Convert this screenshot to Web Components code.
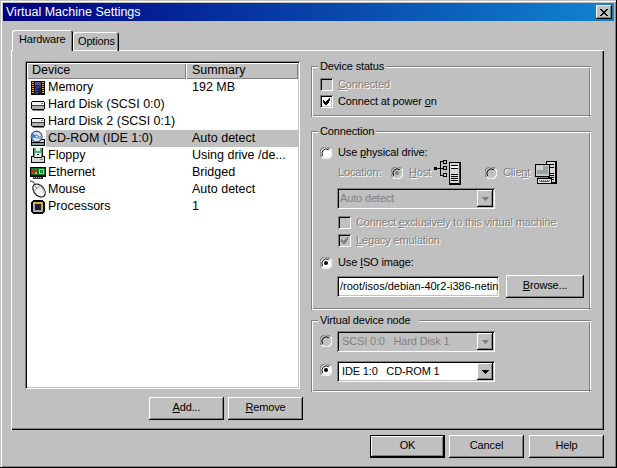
<!DOCTYPE html>
<html>
<head>
<meta charset="utf-8">
<title>Virtual Machine Settings</title>
<style>
  html, body { margin: 0; padding: 0; background: #c0c0c0; }
  body { font: 11px/15px "Liberation Sans", Arial, sans-serif; letter-spacing: -.15px; color: #000; }
</style>
</head>
<body>
<vm-window>
  <vm-titlebar slot="title">Virtual Machine Settings</vm-titlebar>
  <vm-tabs slot="tabs">
    <vm-panel-left slot="left">
      <vm-list>
        <vm-row icon="memory" name="Memory" summary="192 MB"></vm-row>
        <vm-row icon="disk" name="Hard Disk (SCSI 0:0)"></vm-row>
        <vm-row icon="disk" name="Hard Disk 2 (SCSI 0:1)"></vm-row>
        <vm-row icon="cd" name="CD-ROM (IDE 1:0)" summary="Auto detect" selected></vm-row>
        <vm-row icon="floppy" name="Floppy" summary="Using drive /de..."></vm-row>
        <vm-row icon="ethernet" name="Ethernet" summary="Bridged"></vm-row>
        <vm-row icon="mouse" name="Mouse" summary="Auto detect"></vm-row>
        <vm-row icon="cpu" name="Processors" summary="1"></vm-row>
      </vm-list>
      <vm-actions>
        <vm-button><u>A</u>dd...</vm-button>
        <vm-button><u>R</u>emove</vm-button>
      </vm-actions>
    </vm-panel-left>

    <vm-group slot="right" label="Device status" style="height:51px">
      <vm-check disabled style="margin-top:3px"><u>C</u>onnected</vm-check>
      <vm-check checked>Connect at power <u>o</u>n</vm-check>
    </vm-group>

    <vm-group slot="right" label="Connection" style="height:179px;margin-top:14px">
      <vm-radio style="margin-top:6px">Use <u>p</u>hysical drive:</vm-radio>
      <vm-location></vm-location>
      <vm-combo disabled style="margin:3px 0 0 17px">Auto detect</vm-combo>
      <vm-check disabled style="margin:5px 0 0 18px">Connect <u>e</u>xclusively to this virtual machine</vm-check>
      <vm-check disabled checked style="margin:1px 0 0 18px"><u>L</u>egacy emulation</vm-check>
      <vm-radio checked style="margin-top:5px">Use <u>I</u>SO image:</vm-radio>
      <vm-isorow></vm-isorow>
    </vm-group>

    <vm-group slot="right" label="Virtual device node" gap="8" style="height:72px;margin-top:10px">
      <vm-noderow disabled value="SCSI 0:0   Hard Disk 1" style="margin-top:4px;--up:2px"></vm-noderow>
      <vm-noderow checked value="IDE 1:0   CD-ROM 1" style="margin-top:9px;--up:4px"></vm-noderow>
    </vm-group>
  </vm-tabs>
  <vm-footer slot="footer">
    <vm-button default>OK</vm-button>
    <vm-button style="margin-left:4px">Cancel</vm-button>
    <vm-button style="margin-left:5px">Help</vm-button>
  </vm-footer>
</vm-window>

<script>
// little helper, every element here is just a shadow root with fixed markup
function shadow(el, html) {
  const template = document.createElement("template");
  template.innerHTML = html;
  el.attachShadow({ mode: "open" });
  el.shadowRoot.appendChild(template.content.cloneNode(true));
}

const ICONS = {
  memory: `<svg width="16" height="16" viewBox="0 0 16 16" shape-rendering="crispEdges">
    <rect x="1" y="1" width="14" height="14" fill="#000"/>
    <path fill="#e8b830" d="M2 2h2v1H2zM2 4h2v1H2zM2 6h2v1H2zM2 8h2v1H2zM2 10h2v1H2zM2 12h2v1H2zM12 2h2v1h-2zM12 4h2v1h-2zM12 6h2v1h-2zM12 8h2v1h-2zM12 10h2v1h-2zM12 12h2v1h-2z"/>
    <rect x="5" y="2" width="6" height="12" fill="#30306a"/>
    <rect x="5" y="2" width="6" height="3" fill="#50508c"/>
    <rect x="8" y="8" width="3" height="6" fill="#1c1c44"/>
  </svg>`,
  disk: `<svg width="16" height="16" viewBox="0 0 16 16" shape-rendering="crispEdges">
    <path fill="#000" d="M2 4h12v1h1v7h-1v1H2v-1H1V5h1z"/>
    <rect x="2" y="5" width="12" height="3" fill="#f0f0f0"/>
    <rect x="2" y="9" width="12" height="3" fill="#b0b0b0"/>
    <rect x="2" y="8" width="12" height="1" fill="#404040"/>
    <rect x="11" y="6" width="2" height="1" fill="#20c040"/>
    <rect x="3" y="13" width="11" height="1" fill="#808080"/>
  </svg>`,
  cd: `<svg width="17" height="17" viewBox="0 0 17 17">
    <path shape-rendering="crispEdges" fill="#000" d="M1 9h15v7H1z"/>
    <path shape-rendering="crispEdges" fill="#c8d8c8" d="M2 10h13v2H2z"/>
    <path shape-rendering="crispEdges" fill="#70a090" d="M2 13h13v2H2z"/>
    <circle cx="7" cy="6.5" r="5.8" fill="#d0e4f8" stroke="#000"/>
    <path d="M7 6.5L3 2.6A5.5 5.5 0 0 0 2 9z" fill="#4a80d0"/>
    <path d="M7 6.5L11 10A5.5 5.5 0 0 0 12.4 5z" fill="#88b0e8"/>
    <circle cx="7" cy="6.5" r="1.5" fill="#fff" stroke="#204080" stroke-width=".8"/>
  </svg>`,
  floppy: `<svg width="17" height="17" viewBox="0 0 17 17" shape-rendering="crispEdges">
    <path fill="#000" d="M3 0h11v9h2v7H1V9h2z"/>
    <rect x="4" y="1" width="9" height="9" fill="#58a878"/>
    <rect x="6" y="1" width="5" height="3" fill="#e8f0e8"/>
    <rect x="5" y="6" width="7" height="4" fill="#fff"/>
    <rect x="7" y="7" width="3" height="1" fill="#000"/>
    <rect x="2" y="11" width="13" height="4" fill="#d8d8d8"/>
    <rect x="2" y="10" width="2" height="1" fill="#d8d8d8"/>
    <rect x="13" y="10" width="2" height="1" fill="#d8d8d8"/>
    <rect x="11" y="12" width="3" height="1" fill="#808080"/>
  </svg>`,
  ethernet: `<svg width="16" height="16" viewBox="0 0 16 16" shape-rendering="crispEdges">
    <rect x="0" y="2" width="16" height="10" fill="#000"/>
    <rect x="1" y="3" width="14" height="7" fill="#087828"/>
    <path fill="#f0d020" d="M9 4h5v1H9zM9 8h5v1H9zM9 5h1v3H9zM13 5h1v3h-1z"/>
    <rect x="11" y="6" width="1" height="1" fill="#f0d020"/>
    <path fill="#e03020" d="M2 4h2v2H2zM5 4h2v2H5zM2 7h2v2H2z"/>
    <path fill="#f0b020" d="M5 7h2v2H5z"/>
    <rect x="3" y="12" width="10" height="2" fill="#303030"/>
    <path fill="#e8c030" d="M4 12h1v1H4zM6 12h1v1H6zM8 12h1v1H8zM10 12h1v1h-1z"/>
  </svg>`,
  mouse: `<svg width="17" height="17" viewBox="0 0 17 17" style="overflow:visible">
    <path d="M0 -.5c2 2 3.5 .5 4.500 3" fill="none" stroke="#000"/>
    <g transform="rotate(-42 9 9.500)">
      <ellipse cx="9" cy="9.500" rx="5" ry="7.500" fill="#f4f4f4" stroke="#000"/>
      <path d="M4.500 6.500h9" stroke="#a0a0a0"/>
      <path d="M9 2.500v4" stroke="#a0a0a0"/>
      <path d="M12.600 9a6 6 0 0 1-2 6.300" fill="none" stroke="#b8b8b8" stroke-width="1.400"/>
    </g>
  </svg>`,
  cpu: `<svg width="16" height="16" viewBox="0 0 16 16" shape-rendering="crispEdges">
    <path fill="#000" d="M3 1h10v1h1v1h1v10h-1v1h-1v1H3v-1H2v-1H1V3h1V2h1z"/>
    <rect x="3" y="3" width="10" height="10" fill="#a8a8a8"/>
    <path fill="#e8b830" d="M4 3h1v1H4zM6 3h1v1H6zM8 3h1v1H8zM10 3h1v1h-1zM4 12h1v1H4zM6 12h1v1H6zM8 12h1v1H8zM10 12h1v1h-1zM3 5h1v1H3zM3 7h1v1H3zM3 9h1v1H3zM12 5h1v1h-1zM12 7h1v1h-1zM12 9h1v1h-1z"/>
    <rect x="5" y="5" width="6" height="6" fill="#202030"/>
  </svg>`,
  host: `<svg width="27" height="25" viewBox="0 0 27 25" shape-rendering="crispEdges" style="flex:none">
    <path fill="#000" d="M0 7h3v3H0zM3 8h3v1H3zM6 1h1v15H6zM7 1h2v1H7zM7 8h2v1H7zM7 15h2v1H7zM9 0h4v4H9zM9 6h4v4H9zM9 13h4v4H9z"/>
    <path fill="#c0c0c0" d="M10 1h2v2h-2zM10 7h2v2h-2zM10 14h2v2h-2z"/>
    <rect x="15" y="2" width="12" height="23" fill="#000"/>
    <rect x="16" y="3" width="9" height="20" fill="#d8d8d8"/>
    <path fill="#000" d="M17 5h7v1h-7zM17 8h7v1h-7zM17 14h7v1h-7zM17 16h7v1h-7zM17 18h7v1h-7zM17 20h7v1h-7z"/>
    <rect x="17" y="6" width="7" height="2" fill="#fff"/>
    <rect x="25" y="3" width="1" height="21" fill="#404040"/>
  </svg>`,
  client: `<svg width="22" height="24" viewBox="0 0 22 24" shape-rendering="crispEdges" style="flex:none">
    <rect x="11" y="0" width="11" height="23" fill="#000"/>
    <rect x="12" y="1" width="8" height="20" fill="#d8d8d8"/>
    <path fill="#000" d="M13 3h6v1h-6zM13 6h6v1h-6zM13 12h6v1h-6zM13 14h6v1h-6zM13 16h6v1h-6zM13 18h6v1h-6z"/>
    <rect x="0" y="3" width="15" height="13" fill="#000"/>
    <rect x="1" y="4" width="13" height="11" fill="#c8c8c8"/>
    <rect x="2" y="5" width="11" height="8" fill="#98a898"/>
    <rect x="2" y="5" width="6" height="4" fill="#c8d8d0"/>
    <rect x="2" y="16" width="11" height="1" fill="#808080"/>
    <rect x="2" y="17" width="15" height="6" fill="#000"/>
    <rect x="3" y="18" width="13" height="4" fill="#e0e0e0"/>
    <path fill="#606060" d="M4 19h1v1H4zM6 19h1v1H6zM8 19h1v1H8zM10 19h1v1h-1zM12 19h1v1h-1zM14 19h1v1h-1zM5 21h9v-1H5z"/>
  </svg>`
};

const RAISED = "inset -1px -1px #000, inset 1px 1px #fff, inset -2px -2px #808080";
const SUNKEN = "inset 1px 1px #808080, inset -1px -1px #fff, inset 2px 2px #000, inset -2px -2px #c0c0c0";

class VmWindow extends HTMLElement {
  constructor() {
    super();
    shadow(this, `
      <style>
        :host {
          display: flex;
          flex-direction: column;
          box-sizing: border-box;
          width: 617px;
          height: 468px;
          padding: 3px;
          background: #c0c0c0;
          box-shadow: inset -1px -1px #000, inset 1px 1px #c0c0c0, inset 2px 2px #fff, inset -2px -2px #808080;
        }
      </style>
      <slot name="title"></slot>
      <slot name="tabs"></slot>
      <slot name="footer"></slot>
    `);
  }
}
customElements.define("vm-window", VmWindow);

class VmTitlebar extends HTMLElement {
  constructor() {
    super();
    shadow(this, `
      <style>
        :host {
          display: flex;
          align-items: center;
          justify-content: space-between;
          height: 18px;
          padding: 0 2px 0 3px;
          font-size: 12.5px;
          letter-spacing: 0;
          color: #fff;
          background: linear-gradient(90deg, #000080, #1084d0);
        }
        .close {
          display: flex;
          align-items: center;
          justify-content: center;
          width: 16px;
          height: 14px;
          background: #c0c0c0;
          box-shadow: ${RAISED};
        }
      </style>
      <span><slot></slot></span>
      <div class="close">
        <svg width="8" height="7" viewBox="0 0 8 7" shape-rendering="crispEdges">
          <path fill="#000" d="M0 0h2v1h1v1h2V1h1V0h2v1H7v1H6v1H5v1h1v1h1v1h1v1H6V6H5V5H3v1H2v1H0V6h1V5h1V4h1V3H2V2H1V1H0z"/>
        </svg>
      </div>
    `);
  }
}
customElements.define("vm-titlebar", VmTitlebar);

class VmTabs extends HTMLElement {
  constructor() {
    super();
    shadow(this, `
      <style>
        :host { display: block; margin: 9px 0 0 8px; width: 593px; }
        .strip { display: flex; align-items: flex-end; height: 21px; padding-left: 1px; position: relative; z-index: 1; margin-bottom: -1px; }
        .tab {
          box-sizing: border-box;
          background: #c0c0c0;
          border-radius: 3px 3px 0 0;
          box-shadow: inset 1px 1px #fff, inset -1px 0 #000, inset -2px 0 #808080;
        }
        .on { width: 61px; height: 21px; padding: 2px 0 0 7px; }
        .off { width: 46px; height: 19px; padding: 2px 0 0 5px; box-shadow: inset 1px 1px #fff, inset -1px 0 #000, inset -2px 0 #808080, inset 0 -1px #fff; }
        .panel {
          display: flex;
          box-sizing: border-box;
          height: 380px;
          padding: 11px 0 0 14px;
          box-shadow: inset 1px 1px #fff, inset -1px -1px #000, inset -2px -2px #808080;
        }
        .left { display: block; width: 278px; }
        .right { display: flex; flex-direction: column; width: 281px; margin: 5px 0 0 8px; }
        ::slotted([slot="right"]) { flex: none; }
      </style>
      <div class="strip">
        <div class="tab on">Hardware</div>
        <div class="tab off">Options</div>
      </div>
      <div class="panel">
        <div class="left"><slot name="left"></slot></div>
        <div class="right"><slot name="right"></slot></div>
      </div>
    `);
  }
}
customElements.define("vm-tabs", VmTabs);

class VmPanelLeft extends HTMLElement {
  constructor() {
    super();
    shadow(this, `<style>:host { display: block; }</style><slot></slot>`);
  }
}
customElements.define("vm-panel-left", VmPanelLeft);

class VmList extends HTMLElement {
  constructor() {
    super();
    shadow(this, `
      <style>
        :host {
          display: block;
          box-sizing: border-box;
          width: 275px;
          height: 328px;
          padding: 2px;
          font-size: 12.5px;
          letter-spacing: 0;
          background: #fff;
          box-shadow: ${SUNKEN};
        }
        .head { display: flex; height: 16px; }
        .head div {
          box-sizing: border-box;
          height: 16px;
          padding-left: 5px;
          line-height: 14px;
          background: #c0c0c0;
          box-shadow: inset 1px 1px #fff, inset -1px -1px #808080;
        }
        .device { width: 159px; }
        .summary { flex: 1; padding-left: 6px !important; }
      </style>
      <div class="head">
        <div class="device">Device</div>
        <div class="summary">Summary</div>
      </div>
      <slot></slot>
    `);
  }
}
customElements.define("vm-list", VmList);

class VmRow extends HTMLElement {
  constructor() {
    super();
    const sel = this.hasAttribute("selected");
    shadow(this, `
      <style>
        :host { display: flex; height: 17px; line-height: 16px; white-space: nowrap; }
        .icon { flex: none; width: 19px; height: 17px; padding-left: 3px; box-sizing: border-box; display: flex; align-items: center; }
        .body { flex: 1; display: flex; ${sel ? "background: #c0c0c0;" : ""} }
        .name { width: 140px; padding-left: 2px; box-sizing: border-box; overflow: hidden; }
        .sum { padding-left: 6px; }
      </style>
      <div class="icon">${ICONS[this.getAttribute("icon")]}</div>
      <div class="body">
        <div class="name">${this.getAttribute("name")}</div>
        <div class="sum">${this.getAttribute("summary") || ""}</div>
      </div>
    `);
  }
}
customElements.define("vm-row", VmRow);

class VmActions extends HTMLElement {
  constructor() {
    super();
    shadow(this, `
      <style>:host { display: flex; justify-content: flex-end; gap: 4px; margin-top: 8px; }</style>
      <slot></slot>
    `);
  }
}
customElements.define("vm-actions", VmActions);

class VmFooter extends HTMLElement {
  constructor() {
    super();
    shadow(this, `
      <style>:host { display: flex; justify-content: flex-end; margin: 5px 10px 0 0; }</style>
      <slot></slot>
    `);
  }
}
customElements.define("vm-footer", VmFooter);

class VmButton extends HTMLElement {
  constructor() {
    super();
    const def = this.hasAttribute("default");
    shadow(this, `
      <style>
        :host {
          display: flex;
          align-items: center;
          justify-content: center;
          box-sizing: border-box;
          width: var(--w, 75px);
          height: 23px;
          padding-bottom: 2px;
          background: #c0c0c0;
          box-shadow: ${def
            ? "inset 0 0 0 1px #000, inset -2px -2px #000, inset 2px 2px #fff, inset -3px -3px #808080"
            : RAISED};
        }
      </style>
      <slot></slot>
    `);
  }
}
customElements.define("vm-button", VmButton);

class VmGroup extends HTMLElement {
  constructor() {
    super();
    shadow(this, `
      <style>
        :host {
          display: block;
          box-sizing: border-box;
          width: 280px;
          padding: 1px 0 0 8px;
          border: 1px solid #808080;
          border-width: 1px 0 0 1px;
          box-shadow: inset 1px 1px #fff;
          background:
            linear-gradient(#808080, #808080) right 1px top 0 / 1px 100% no-repeat,
            linear-gradient(#808080, #808080) left 0 bottom 1px / 100% 1px no-repeat,
            linear-gradient(#fff, #fff) right 0 top 0 / 1px 100% no-repeat,
            linear-gradient(#fff, #fff) left 0 bottom 0 / 100% 1px no-repeat;
        }
        .legend {
          display: table;
          height: 14px;
          line-height: 14px;
          margin: -9px 0 0 -2px;
          padding: 0 ${this.getAttribute("gap") || 2}px 0 2px;
          background: #c0c0c0;
          white-space: nowrap;
        }
      </style>
      <div class="legend">${this.getAttribute("label")}</div>
      <slot></slot>
    `);
  }
}
customElements.define("vm-group", VmGroup);

class VmCheck extends HTMLElement {
  constructor() {
    super();
    const off = this.hasAttribute("disabled");
    const on = this.hasAttribute("checked");
    shadow(this, `
      <style>
        :host { display: flex; align-items: center; height: 17px; white-space: nowrap; ${off ? "color: #808080; text-shadow: 1px 1px #fff;" : ""} }
        .box {
          flex: none;
          display: flex;
          width: 13px;
          height: 13px;
          margin-right: 5px;
          background: ${off ? "#c0c0c0" : "#fff"};
          box-shadow: ${SUNKEN};
        }
      </style>
      <div class="box">${on ? `<svg width="13" height="13" viewBox="0 0 13 13" shape-rendering="crispEdges">
        <path fill="${off ? "#808080" : "#000"}" d="M3 5h1v1h1v1h1V6h1V5h1V4h1V3h1v3h-1v1H9v1H8v1H7v1H5V9H4V8H3z"/>
      </svg>` : ""}</div>
      <span><slot></slot></span>
    `);
  }
}
customElements.define("vm-check", VmCheck);

function radioSvg(on, off) {
  return `<svg width="12" height="12" viewBox="0 0 12 12" style="flex:none;display:block;margin-bottom:var(--up,0)">
    <circle cx="6" cy="6" r="5" fill="${off ? "#c0c0c0" : "#fff"}"/>
    <path d="M1.6 10.2A6 6 0 0 1 10.2 1.6" fill="none" stroke="#808080" stroke-width="1.1"/>
    <path d="M2.6 8.8A4.5 4.5 0 0 1 8.8 2.6" fill="none" stroke="#000" stroke-width="1"/>
    <path d="M10.2 1.6A6 6 0 0 1 1.6 10.2" fill="none" stroke="#fff" stroke-width="1.2"/>
    ${on ? `<circle cx="6" cy="6" r="2" fill="${off ? "#808080" : "#000"}"/>` : ""}
  </svg>`;
}

class VmRadio extends HTMLElement {
  constructor() {
    super();
    const off = this.hasAttribute("disabled");
    shadow(this, `
      <style>
        :host { display: flex; align-items: center; height: 17px; white-space: nowrap; ${off ? "color: #808080; text-shadow: 1px 1px #fff;" : ""} }
        .gap { width: 6px; flex: none; }
      </style>
      ${radioSvg(this.hasAttribute("checked"), off)}
      <div class="gap"></div>
      <span><slot></slot></span>
    `);
  }
}
customElements.define("vm-radio", VmRadio);

class VmLocation extends HTMLElement {
  constructor() {
    super();
    shadow(this, `
      <style>
        :host { display: flex; align-items: center; height: 25px; margin: -1px 0 0 18px; color: #808080; text-shadow: 1px 1px #fff; }
        .label { width: 53px; }
        .w-host { width: 43px; }
        .w-client { width: 50px; margin-left: 24px; }
        vm-radio { flex: none; }
      </style>
      <div class="label">Location:</div>
      <vm-radio disabled checked class="w-host"><u>H</u>ost</vm-radio>
      ${ICONS.host}
      <vm-radio disabled class="w-client">Clie<u>n</u>t</vm-radio>
      ${ICONS.client}
    `);
  }
}
customElements.define("vm-location", VmLocation);

class VmCombo extends HTMLElement {
  constructor() {
    super();
    const off = this.hasAttribute("disabled");
    shadow(this, `
      <style>
        :host {
          display: flex;
          box-sizing: border-box;
          width: 158px;
          height: 21px;
          padding: 2px;
          background: ${off ? "#c0c0c0" : "#fff"};
          box-shadow: ${SUNKEN};
        }
        .val { flex: 1; padding-left: var(--pad, 1px); line-height: 16px; white-space: pre; color: ${off ? "#808080" : "#000"}; }
        .arrow {
          flex: none;
          display: flex;
          align-items: center;
          justify-content: center;
          width: 16px;
          height: 17px;
          background: #c0c0c0;
          box-shadow: ${RAISED};
        }
      </style>
      <div class="val"><slot></slot></div>
      <div class="arrow">
        <svg width="7" height="4" viewBox="0 0 7 4" shape-rendering="crispEdges">
          <path fill="${off ? "#808080" : "#000"}" d="M0 0h7v1H6v1H5v1H4v1H3V3H2V2H1V1H0z"/>
        </svg>
      </div>
    `);
  }
}
customElements.define("vm-combo", VmCombo);

class VmIsorow extends HTMLElement {
  constructor() {
    super();
    shadow(this, `
      <style>
        :host { display: flex; align-items: center; height: 23px; margin: 4px 0 0 17px; }
        .field {
          box-sizing: border-box;
          width: 162px;
          height: 21px;
          padding: 2px 2px 2px 3px;
          line-height: 16px;
          letter-spacing: 0;
          background: #fff;
          overflow: hidden;
          white-space: nowrap;
          box-shadow: ${SUNKEN};
        }
        vm-button { margin-left: 7px; --w: 78px; }
      </style>
      <div class="field">/root/isos/debian-40r2-i386-netin</div>
      <vm-button><u>B</u>rowse...</vm-button>
    `);
  }
}
customElements.define("vm-isorow", VmIsorow);

class VmNoderow extends HTMLElement {
  constructor() {
    super();
    const off = this.hasAttribute("disabled");
    shadow(this, `
      <style>
        :host { display: flex; align-items: center; height: 21px; --pad: 3px; }
        .gap { width: 5px; flex: none; }
      </style>
      ${radioSvg(this.hasAttribute("checked"), off)}
      <div class="gap"></div>
      <vm-combo ${off ? "disabled" : ""}>${this.getAttribute("value")}</vm-combo>
    `);
  }
}
customElements.define("vm-noderow", VmNoderow);
</script>
</body>
</html>
